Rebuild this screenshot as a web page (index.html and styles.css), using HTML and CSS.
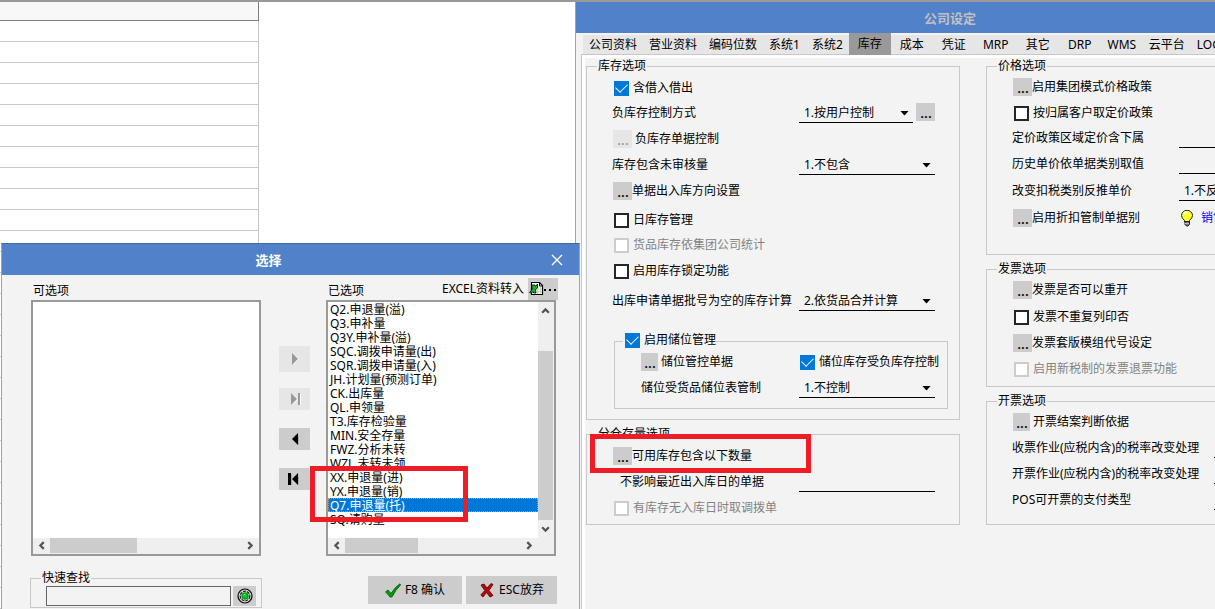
FILE: index.html
```html
<!DOCTYPE html>
<html lang="zh-CN">
<head>
<meta charset="utf-8">
<title>公司设定</title>
<link rel="stylesheet" href="styles.css">
</head>
<body>
<div class="desktop">
  <table class="sheet">
    <thead><tr><th></th></tr></thead>
    <tbody>
      <tr><td></td></tr><tr><td></td></tr><tr><td></td></tr><tr><td></td></tr><tr><td></td></tr>
      <tr><td></td></tr><tr><td></td></tr><tr><td></td></tr><tr><td></td></tr><tr><td></td></tr>
      <tr><td></td></tr><tr><td></td></tr><tr><td></td></tr><tr><td></td></tr><tr><td></td></tr>
      <tr><td></td></tr><tr><td></td></tr><tr><td></td></tr><tr><td></td></tr><tr><td></td></tr>
      <tr><td></td></tr><tr><td></td></tr><tr><td></td></tr><tr><td></td></tr><tr><td></td></tr>
      <tr><td></td></tr><tr><td></td></tr><tr><td></td></tr><tr><td></td></tr><tr><td></td></tr>
    </tbody>
  </table>

  <section class="window settings">
    <header class="titlebar inactive"><h1>公司设定</h1></header>
    <nav class="tabs">
      <button>公司资料</button><button>营业资料</button><button>编码位数</button><button>系统1</button><button>系统2</button><button class="active">库存</button><button>成本</button><button>凭证</button><button>MRP</button><button>其它</button><button>DRP</button><button>WMS</button><button>云平台</button><button>LOGO</button>
    </nav>
    <div class="page">
      <div class="column main-column">
        <fieldset class="group">
          <legend>库存选项</legend>
          <div class="rows">
            <div class="row h28"><label class="check"><input type="checkbox" checked>含借入借出</label></div>
            <div class="row h22">
              <label for="neg">负库存控制方式</label>
              <div class="pair"><span class="pick"><select id="neg"><option>1.按用户控制</option></select></span><button class="more" aria-label="更多">...</button></div>
            </div>
            <div class="row h30"><span class="item spaced"><button class="more" disabled aria-label="设置">...</button>负库存单据控制</span></div>
            <div class="row h22">
              <label for="unaudited">库存包含未审核量</label>
              <span class="pick"><select id="unaudited"><option>1.不包含</option></select></span>
            </div>
            <div class="row h30"><span class="item"><button class="more" aria-label="设置">...</button>单据出入库方向设置</span></div>
            <div class="row h28"><label class="check"><input type="checkbox">日库存管理</label></div>
            <div class="row h22"><label class="check off"><input type="checkbox" disabled>货品库存依集团公司统计</label></div>
            <div class="row h30"><label class="check"><input type="checkbox">启用库存锁定功能</label></div>
            <div class="row h30">
              <label for="batch">出库申请单据批号为空的库存计算</label>
              <span class="pick"><select id="batch"><option>2.依货品合并计算</option></select></span>
            </div>
          </div>
          <fieldset class="group subgroup">
            <legend><label class="check"><input type="checkbox" checked>启用储位管理</label></legend>
            <div class="row h24"><span class="item spaced"><button class="more small" aria-label="设置">...</button>储位管控单据</span><label class="check"><input type="checkbox" checked>储位库存受负库存控制</label></div>
            <div class="row h28"><label for="slot">储位受货品储位表管制</label><span class="pick"><select id="slot"><option>1.不控制</option></select></span></div>
          </fieldset>
        </fieldset>

        <fieldset class="group">
          <legend>分仓存量选项</legend>
          <div class="rows">
            <div class="row h28"><span class="item"><button class="more" aria-label="设置">...</button>可用库存包含以下数量</span></div>
            <div class="row h24"><label class="indent" for="noeffect">不影响最近出入库日的单据</label><input class="line" id="noeffect" type="text"></div>
            <div class="row h28"><label class="check off"><input type="checkbox" disabled>有库存无入库日时取调拨单</label></div>
          </div>
        </fieldset>
      </div>

      <div class="column side-column">
        <fieldset class="group price">
          <legend>价格选项</legend>
          <div class="rows">
            <div class="row h24"><span class="item"><button class="more" aria-label="设置">...</button>启用集团模式价格政策</span></div>
            <div class="row h28"><label class="check"><input type="checkbox">按归属客户取定价政策</label></div>
            <div class="row h22"><label for="area">定价政策区域定价含下属</label><input class="line" id="area" type="text"></div>
            <div class="row h30"><label for="hist">历史单价依单据类别取值</label><input class="line" id="hist" type="text"></div>
            <div class="row h24"><label for="tax">改变扣税类别反推单价</label><span class="pick"><select id="tax"><option>1.不反推</option></select></span></div>
            <div class="row h30"><span class="item"><button class="more" aria-label="设置">...</button>启用折扣管制单据别</span>
              <span class="hint"><svg class="bulb" viewBox="0 0 12 17" aria-hidden="true"><path d="M3.5 10.5Q.5 8 .5 5.5A5.3 5 0 0 1 11.500 5.500Q11.500 8 8.500 10.500V12H3.500Z" fill="#ffff28" stroke="#222"/><path d="M3 3.500Q5 1 6 3" fill="none" stroke="#fff" stroke-width="2"/><path d="M4 11.500h4.500v3L7 16H5.500L4 14.500Z" fill="#777" stroke="#222"/><path d="M4 13.500h4" stroke="#bbb"/></svg><a href="#">销售折扣</a></span></div>
          </div>
        </fieldset>
        <fieldset class="group">
          <legend>发票选项</legend>
          <div class="rows">
            <div class="row h24"><span class="item"><button class="more" aria-label="设置">...</button>发票是否可以重开</span></div>
            <div class="row h30"><label class="check"><input type="checkbox">发票不重复列印否</label></div>
            <div class="row h22"><span class="item"><button class="more" aria-label="设置">...</button>发票套版模组代号设定</span></div>
            <div class="row h30"><label class="check off"><input type="checkbox" disabled>启用新税制的发票退票功能</label></div>
          </div>
        </fieldset>
        <fieldset class="group billing">
          <legend>开票选项</legend>
          <div class="rows">
            <div class="row h24"><span class="item spaced"><button class="more small" aria-label="设置">...</button>开票结案判断依据</span></div>
            <div class="row h28"><label for="b1">收票作业(应税内含)的税率改变处理</label><input class="line" id="b1" type="text"></div>
            <div class="row h24"><label for="b2">开票作业(应税内含)的税率改变处理</label><input class="line" id="b2" type="text"></div>
            <div class="row h28"><label for="b3">POS可开票的支付类型</label><input class="line" id="b3" type="text"></div>
          </div>
        </fieldset>
      </div>
    </div>
    <div class="mark mark-option"></div>
  </section>

  <section class="window dialog">
    <header class="titlebar"><h2>选择</h2><button class="close" aria-label="关闭"><svg viewBox="0 0 12 12"><path d="M1 1l10 10M11 1L1 11" stroke="#fff" stroke-width="1.400" fill="none"/></svg></button></header>
    <div class="lists">
      <div class="list-column">
        <div class="list-head"><span>可选项</span></div>
        <div class="listbox">
          <ul class="items" role="listbox" aria-label="可选项"></ul>
          <div class="hscroll wide"><svg class="arrow" viewBox="0 0 8 8"><path d="M6 1L3 4l3 3"/></svg><span class="thumb"></span><svg class="arrow" viewBox="0 0 8 8"><path d="M2 1l3 3-3 3"/></svg></div>
        </div>
      </div>
      <div class="movers">
        <button class="tall" disabled aria-label="添加"><svg viewBox="0 0 16 12"><path d="M6 1v11l6-5.500Z" fill="#fff"/><path d="M5 0v12l6-6Z" fill="#999"/></svg></button>
        <button disabled aria-label="全部添加"><svg viewBox="0 0 16 12"><path d="M5 1v11l6-5.500ZM13 1h1v11h-2Z" fill="#fff"/><path d="M4 0v12l6-6ZM11 0h2v12h-2Z" fill="#999"/></svg></button>
        <button aria-label="移除"><svg viewBox="0 0 16 12"><path d="M12 1v11l-3-2Z" fill="#aaa"/><path d="M11 0v12L5 6Z" fill="#000"/></svg></button>
        <button aria-label="全部移除"><svg viewBox="0 0 16 12"><path d="M12 1v11l-3-2ZM4 1h1v11H3Z" fill="#aaa"/><path d="M11 0v12L5 6ZM1 0h3v12H1Z" fill="#000"/></svg></button>
      </div>
      <div class="list-column">
        <div class="list-head"><span>已选项</span><button class="excel"><span>EXCEL资料转入</span><span class="excel-face"><svg viewBox="0 0 28 16" aria-hidden="true"><path d="M2.500 1.500h8l3 3v9h-11Z" fill="#fff" stroke="#000" stroke-width="1.200"/><path d="M10.500 1v4h3" fill="none" stroke="#000"/><path d="M6 8h7M6 11h7M8.500 6v7M11.500 6v7" stroke="#c4d8c4"/><path d="M.5 11.500L3.500 8 2.500 4H6l.5 1.500L8.500 3v4L6.500 8.500 7 12H4.500L4 10.500 2.500 12Z" fill="#17b82b" stroke="#000" stroke-width=".8"/><path d="M15 8h2v2h-2ZM20 8h2v2h-2ZM25 8h2v2h-2Z" fill="#000"/></svg></span></button></div>
        <div class="listbox">
          <div class="list-area">
            <ul class="items" role="listbox" aria-label="已选项">
              <li>Q2.申退量(溢)</li><li>Q3.申补量</li><li>Q3Y.申补量(溢)</li><li>SQC.调拨申请量(出)</li><li>SQR.调拨申请量(入)</li><li>JH.计划量(预测订单)</li><li>CK.出库量</li><li>QL.申领量</li><li>T3.库存检验量</li><li>MIN.安全存量</li><li>FWZ.分析未转</li><li>WZL.未转未领</li><li>XX.申退量(进)</li><li>YX.申退量(销)</li><li class="selected" role="option" aria-selected="true">Q7.申退量(托)</li><li>SQ.请购量</li>
            </ul>
            <div class="vscroll"><svg class="arrow" viewBox="0 0 8 8"><path d="M1 6l3-3 3 3"/></svg><span class="thumb"></span><svg class="arrow" viewBox="0 0 8 8"><path d="M1 2l3 3 3-3"/></svg></div>
          </div>
          <div class="hscroll"><svg class="arrow" viewBox="0 0 8 8"><path d="M6 1L3 4l3 3"/></svg><span class="thumb"></span><svg class="arrow" viewBox="0 0 8 8"><path d="M2 1l3 3-3 3"/></svg></div>
        </div>
      </div>
    </div>
    <footer class="foot">
      <fieldset class="group find">
        <legend><label for="find">快速查找</label></legend>
        <div class="find-row"><input id="find" type="text"><button class="go" aria-label="查找"><svg viewBox="0 0 16 16"><circle cx="8" cy="8" r="7" fill="#ddd" stroke="#000" stroke-width="1.200"/><circle cx="8" cy="8" r="4.800" fill="#b5e5b5" stroke="#222" stroke-width="1.200" stroke-dasharray="3 1"/><circle cx="8" cy="8" r="3.200" fill="#08c818" stroke="#063" stroke-width=".8"/><path d="M6.500 7.500Q7 6 8.500 6.500" stroke="#8f8" fill="none"/></svg></button></div>
      </fieldset>
      <div class="actions">
        <button class="ok"><svg viewBox="0 0 16 15" aria-hidden="true"><path d="M.5 9L3 7l3 3.500Q10 4 15 .8L15.500 2Q10.500 7 7 14H5Q3 11 .5 9Z" fill="#00a000" stroke="#04500c" stroke-width=".8"/></svg>F8 确认</button>
        <button class="cancel"><svg viewBox="0 0 14 15" aria-hidden="true"><path d="M1 2l3-1 3 4 4-4.500 2 1L9 7.500l4 5L10 14l-3.500-4.500L3 14 .800 12l4-4.500Z" fill="#b80808" stroke="#500" stroke-width=".8"/></svg>ESC放弃</button>
      </div>
    </footer>
    <div class="mark mark-list"></div>
  </section>
</div>
</body>
</html>
```
FILE: styles.css
```css
* { box-sizing: border-box; }

body {
  margin: 0;
  color: #000;
  background: #fff;
}

body, button, input, select {
  font: 12px/16px "Noto Sans", "Noto Sans CJK SC", sans-serif;
}

button {
  padding: 0;
  border: 0;
  color: #000;
  background: #ccc;
}

svg { display: block; }

.desktop {
  position: relative;
  height: 100vh;
  overflow: hidden;
  border-top: 2px solid #999;
}

.sheet {
  width: 259px;
  border-collapse: separate;
  border-spacing: 0;
}

.sheet th, .sheet td {
  height: 21px;
  padding: 0;
  border-right: 1px solid #c8c8c8;
  border-bottom: 1px solid #c8c8c8;
}

.sheet th {
  height: 19px;
  border-color: #7d7d7d;
  background: #f8f8f8;
}

.window {
  position: absolute;
  border: 1px solid #8aa7d3;
  border-top-color: #44699f;
  background: #f3f3f3;
}

.settings {
  top: -1px;
  bottom: -20px;
  left: 575px;
  right: -110px;
}

.dialog {
  top: 241px;
  bottom: -20px;
  left: 1px;
  width: 579px;
}

.titlebar {
  display: flex;
  align-items: center;
  height: 31px;
  color: #fff;
  background: #5182c9;
}

.titlebar h1, .titlebar h2 {
  flex: 1;
  margin: 0;
  font-size: 13px;
  font-weight: 700;
  text-align: center;
}

.titlebar.inactive { color: #c0c0c0; }

.close {
  display: grid;
  place-items: center;
  width: 44px;
  height: 28px;
  background: none;
}

.close svg { width: 12px; height: 12px; }

/* Settings window */
.tabs {
  display: flex;
  align-items: flex-end;
  height: 21px;
  margin-left: 7px;
  background: linear-gradient(#f3f3f3 2px, #e6e6e6 2px);
}

.tabs button {
  flex: none;
  min-width: 42px;
  height: 19px;
  padding: 0 6px;
  background: none;
}

.tabs .active {
  z-index: 1;
  height: 22px;
  margin-bottom: -1px;
  background: #999;
}

.page {
  display: flex;
  gap: 26px;
  height: calc(100% - 52px);
  margin-left: 5px;
  border: 1px solid #c8c8c8;
  box-shadow: inset 3px 3px #fff;
  padding: 3px 0 0 4px;
}

.column {
  display: flex;
  flex-direction: column;
  gap: 6px;
}

.main-column { flex: 0 0 374px; }

.side-column { flex: 1; }

.group {
  min-width: 0;
  margin: 0;
  padding: 0 0 2px;
  border: 1px solid #c8c8c8;
}

.group legend {
  height: 16px;
  margin-left: 10px;
  padding: 0 1px;
}

.rows { padding-left: 25px; }

.row {
  display: grid;
  grid-template-columns: 187px 136px;
  align-items: center;
  white-space: nowrap;
}

.h22 { height: 22px; }
.h24 { height: 24px; }
.h28 { height: 28px; }
.h30 { height: 30px; }

.side-column .rows { padding-top: 1px; }
.side-column .row { grid-template-columns: 167px 136px; }
.side-column .billing .row { grid-template-columns: 202px 136px; }
.price { padding-bottom: 21px; }
.billing { padding-bottom: 10px; }

.check, .item {
  display: flex;
  align-items: center;
}

.check { gap: 4px; padding-left: 2px; }
.item { padding-left: 1px; }
.item.spaced { gap: 3px; }
.indent { padding-left: 8px; }

.check input {
  appearance: none;
  display: grid;
  flex: none;
  place-items: center;
  width: 15px;
  height: 15px;
  margin: 0;
  border: 2px solid #262626;
  background: #fff;
}

.check input:checked { border-color: #0078d7; background: #0078d7; }

.check input:checked::after {
  content: "";
  width: 10px;
  height: 6px;
  margin-top: -4px;
  border: solid #fff;
  border-width: 0 0 1px 1px;
  rotate: -45deg;
}

.check input:disabled { border-color: #ccc; }
.off { color: #838383; }

.more {
  width: 19px;
  height: 18px;
  padding: 1px 0 0 1px;
  font-size: 14px;
  font-weight: 500;
  line-height: 14px;
}

.more:disabled { color: #999; background: #e6e6e6; }
.more.small { width: 17px; }

.pair {
  display: grid;
  grid-template-columns: 1fr 19px;
  gap: 3px;
}

.pick {
  display: grid;
  align-items: center;
}

.pick select, .pick::after { grid-area: 1 / 1; }

.pick select, .line {
  width: 100%;
  height: 20px;
  padding: 0 0 0 5px;
  border: 0;
  border-bottom: 1px solid #000;
  border-radius: 0;
  background: none;
  color: #000;
  appearance: none;
}

.pick::after {
  content: "";
  justify-self: end;
  width: 9px;
  height: 5px;
  margin-right: 4px;
  background: #000;
  clip-path: polygon(0 0, 100% 0, 50% 100%);
  pointer-events: none;
}

.subgroup {
  margin: 16px 11px 8px 27px;
  padding: 0 0 6px 26px;
}

.subgroup legend { height: 18px; margin-left: -18px; padding: 0; }
.subgroup .row { grid-template-columns: 158px 136px; }
.subgroup .item { padding: 0; }
.subgroup .row .check { padding-left: 1px; }

.hint {
  display: flex;
  align-items: center;
  gap: 8px;
  padding-left: 2px;
}

.bulb { width: 12px; height: 17px; }
.hint a { color: #00f; text-decoration: none; }

/* Selection dialog */
.lists {
  display: flex;
  padding-left: 29px;
}

.list-column { width: 230px; }

.list-head {
  display: flex;
  align-items: center;
  justify-content: space-between;
  height: 25px;
  margin-right: -2px;
  padding-left: 2px;
}

.list-head > span { padding-top: 7px; }

.excel {
  display: flex;
  align-items: center;
  gap: 4px;
  height: 22px;
  margin-top: 3px;
  background: none;
}

.excel-face { padding: 3px 1px; background: #ccc; }
.excel-face svg { width: 28px; height: 16px; }

.listbox {
  display: flex;
  flex-direction: column;
  height: 256px;
  border: 2px solid #999;
  background: #fff;
}

.list-area {
  display: flex;
  flex: 1;
  min-height: 0;
}

.items {
  flex: 1;
  margin: 0;
  padding: 0;
  overflow: hidden;
  line-height: 14px;
  list-style: none;
}

.items li {
  height: 14px;
  padding: 1px 0 0 2px;
  white-space: nowrap;
}

.items .selected {
  color: #fff;
  background: #0078d7;
  outline: 1px dotted #ff8728;
  outline-offset: -1px;
}

.hscroll, .vscroll {
  display: flex;
  align-items: center;
  background: #efefef;
}

.hscroll {
  height: 16px;
  padding: 0 20px 1px 4px;
}

.hscroll.wide { padding-right: 4px; }

.vscroll {
  flex-direction: column;
  width: 16px;
  padding: 4px 1px 4px 0;
}

.arrow {
  flex: none;
  width: 9px;
  height: 9px;
  fill: none;
  stroke: #555;
  stroke-width: 2;
}

.hscroll .thumb {
  width: 73px;
  height: 15px;
  margin: 0 auto 0 4px;
  background: #ccc;
}

.hscroll.wide .thumb { width: 87px; }

.vscroll .thumb {
  width: 15px;
  height: 169px;
  margin-top: auto;
  margin-bottom: 5px;
  background: #ccc;
}

.movers {
  display: flex;
  flex-direction: column;
  gap: 18px;
  width: 65px;
  padding: 71px 0 0 18px;
}

.movers button {
  display: grid;
  place-items: center;
  width: 31px;
  height: 22px;
}

.movers .tall { height: 26px; margin-bottom: -2px; }
.movers button:disabled { background: #e6e6e6; }
.movers svg { width: 16px; height: 12px; }

.foot {
  display: flex;
  justify-content: space-between;
  padding: 14px 22px 0 28px;
}

.find { width: 232px; padding: 0 5px 1px 15px; }
.find legend { margin-left: -5px; }

.find-row {
  display: flex;
  gap: 2px;
}

.find input {
  flex: 1;
  min-width: 0;
  height: 20px;
  border: 1px solid #666;
  background: #f3f3f3;
}

.go {
  display: grid;
  place-items: center;
  width: 23px;
  height: 20px;
}

.go svg { width: 16px; height: 16px; }

.actions {
  display: flex;
  gap: 4px;
  padding-top: 6px;
}

.actions button {
  display: flex;
  align-items: center;
  justify-content: center;
  gap: 4px;
  width: 91px;
  height: 28px;
}

.actions .ok { width: 94px; }
.actions svg { width: 16px; height: 15px; }

/* Red highlight frames */
.mark {
  position: absolute;
  z-index: 2;
  border: 5px solid #ee1c24;
  pointer-events: none;
}

.mark-option { top: 432px; left: 14px; width: 221px; height: 39px; }
.mark-list { top: 222px; left: 308px; width: 158px; height: 56px; }
```
